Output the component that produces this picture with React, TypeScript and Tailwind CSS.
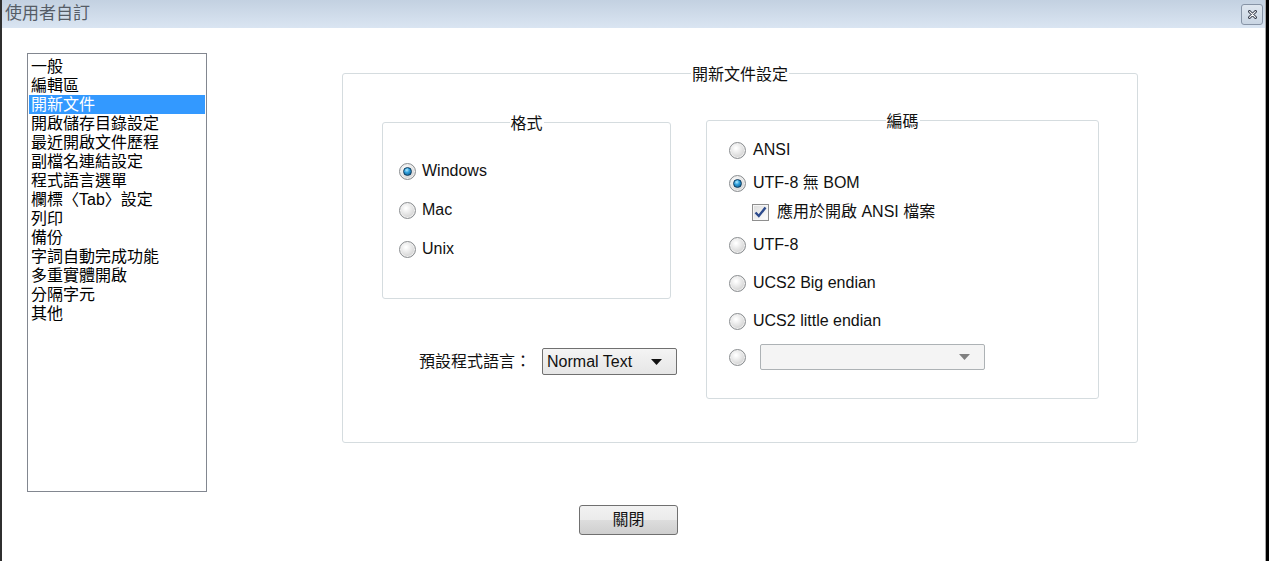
import React from 'react'

const font = { fontFamily: '"Liberation Sans", "Noto Sans CJK TC", sans-serif' }

const categories = [
  '一般',
  '編輯區',
  '開新文件',
  '開啟儲存目錄設定',
  '最近開啟文件歷程',
  '副檔名連結設定',
  '程式語言選單',
  '欄標〈Tab〉設定',
  '列印',
  '備份',
  '字詞自動完成功能',
  '多重實體開啟',
  '分隔字元',
  '其他',
]

function Radio({ checked }: { checked?: boolean }) {
  return (
    <span className="flex h-[17px] w-[17px] shrink-0 items-center justify-center rounded-full border border-[#8a8d90] bg-[radial-gradient(circle_at_40%_35%,#ffffff_5%,#e2e2e2_50%,#bfbfbf_100%)] shadow-[inset_0_0_0_1px_#f0f0f0]">
      {checked && (
        <span className="h-[9px] w-[9px] rounded-full border border-[#0b3a5e] bg-[radial-gradient(circle_at_40%_30%,#b5ecff_0%,#2e9fdc_40%,#08507f_100%)]" />
      )}
    </span>
  )
}

function RadioRow({ label, checked, gap = 'gap-[6px]' }: { label: string; checked?: boolean; gap?: string }) {
  return (
    <div className={`flex h-[20px] items-center ${gap}`}>
      <Radio checked={checked} />
      <span className="whitespace-nowrap text-[16px] leading-[20px] text-[#111]">{label}</span>
    </div>
  )
}

function GroupBox({
  title,
  className,
  children,
}: {
  title: string
  className?: string
  children?: React.ReactNode
}) {
  return (
    <div className={`relative shrink-0 rounded-[3px] border border-[#d5dcdf] ${className ?? ''}`}>
      <span className="absolute -top-[8px] left-1/2 -translate-x-1/2 bg-white px-[1px] text-[16px] leading-[18px] text-[#111]">
        {title}
      </span>
      {children}
    </div>
  )
}

function Arrow({ color }: { color: string }) {
  return (
    <svg width="11" height="6" viewBox="0 0 11 6">
      <path d="M0 0 L11 0 L5.5 6 Z" fill={color} />
    </svg>
  )
}

export default function App() {
  return (
    <div className="flex h-screen flex-col border-l-2 border-r-[3px] border-l-[#2f2f2f] border-r-black bg-white" style={font}>
      <div className="flex h-full flex-col border-r border-r-[#a9a9a9]">
        {/* title bar */}
        <div className="flex h-[28px] shrink-0 items-center justify-between bg-[linear-gradient(#c3d1e1,#dae5f2)] pl-[3px] pr-[2px]">
          <span className="text-[17px] leading-[20px] text-[#555c66]">使用者自訂</span>
          <button className="mt-[1px] flex h-[21px] w-[22px] items-center justify-center rounded-[3px] border border-[#8794a6] bg-[linear-gradient(#dfe7f0,#c9d5e3)]">
            <svg width="9" height="9" viewBox="0 0 9 9">
              <path d="M1.5 1.5 L7.5 7.5 M7.5 1.5 L1.5 7.5" stroke="#3b4250" strokeWidth="3" strokeLinecap="round" />
              <path d="M1.6 1.6 L7.4 7.4 M7.4 1.6 L1.6 7.4" stroke="#ffffff" strokeWidth="1.1" strokeLinecap="round" />
            </svg>
          </button>
        </div>

        {/* body */}
        <div className="flex flex-1 pl-[25px] pt-[25px]">
          <ul className="h-[439px] w-[180px] shrink-0 border border-[#828790] p-[1px] pt-[3px]">
            {categories.map((c, i) => (
              <li
                key={c}
                className={`h-[19px] whitespace-nowrap pl-[2px] text-[16px] leading-[19px] ${
                  i === 2 ? 'bg-[#3399ff] text-white' : 'text-black'
                }`}
              >
                {c}
              </li>
            ))}
          </ul>

          <div className="ml-[135px] flex flex-col pt-[20px]">
            <GroupBox title="開新文件設定" className="h-[370px] w-[796px]">
              <div className="flex pl-[39px] pt-[46px]">
                <div className="mt-[2px] flex w-[289px] shrink-0 flex-col">
                  <GroupBox title="格式" className="h-[177px] w-[289px]">
                    <div className="flex flex-col gap-[19px] pl-[16px] pt-[38px]">
                      <RadioRow label="Windows" checked />
                      <RadioRow label="Mac" />
                      <RadioRow label="Unix" />
                    </div>
                  </GroupBox>
                  <div className="ml-[37px] mt-[49px] flex h-[27px] w-max items-center gap-[11px]">
                    <span className="whitespace-nowrap text-[16px] leading-[20px] text-[#111]">預設程式語言：</span>
                    <div className="flex h-[27px] w-[135px] items-center justify-between rounded-[2px] border border-[#707070] bg-[linear-gradient(#f4f4f4,#e6e6e6)] pl-[4px] pr-[14px]">
                      <span className="text-[16px] leading-[20px] text-[#111]">Normal Text</span>
                      <Arrow color="#111" />
                    </div>
                  </div>
                </div>

                <GroupBox title="編碼" className="ml-[35px] h-[279px] w-[393px]">
                  <div className="flex flex-col pl-[22px] pt-[19px]">
                    <RadioRow label="ANSI" gap="gap-[7px]" />
                    <div className="mt-[13px]">
                      <RadioRow label="UTF-8 無 BOM" checked gap="gap-[7px]" />
                    </div>
                    <div className="ml-[23px] mt-[9px] flex h-[20px] items-center gap-[8px]">
                      <span className="flex h-[17px] w-[17px] items-center justify-center border border-[#8f8f8f] bg-[linear-gradient(135deg,#dcdcdc,#ffffff)] shadow-[inset_0_0_0_1px_#f6f6f6]">
                        <svg width="13" height="12" viewBox="0 0 13 12">
                          <path d="M1.5 6.5 L4.8 10 L11.5 1.5" stroke="#2c4a8c" strokeWidth="2.4" fill="none" />
                        </svg>
                      </span>
                      <span className="whitespace-nowrap text-[16px] leading-[20px] text-[#111]">應用於開啟 ANSI 檔案</span>
                    </div>
                    <div className="mt-[13px]">
                      <RadioRow label="UTF-8" gap="gap-[7px]" />
                    </div>
                    <div className="mt-[18px]">
                      <RadioRow label="UCS2 Big endian" gap="gap-[7px]" />
                    </div>
                    <div className="mt-[18px]">
                      <RadioRow label="UCS2 little endian" gap="gap-[7px]" />
                    </div>
                    <div className="mt-[13px] flex h-[26px] items-center gap-[14px]">
                      <Radio />
                      <div className="flex h-[26px] w-[225px] items-center justify-end rounded-[2px] border border-[#adb2b5] bg-[#f4f4f4] pr-[14px]">
                        <Arrow color="#808080" />
                      </div>
                    </div>
                  </div>
                </GroupBox>
              </div>
            </GroupBox>

            <button className="ml-[237px] mt-[62px] flex h-[30px] w-[99px] items-center justify-center rounded-[3px] border border-[#707070] bg-[linear-gradient(#f2f2f2_0%,#ebebeb_50%,#dddddd_50%,#cfcfcf_100%)] text-[16px] leading-[20px] text-[#111]">
              關閉
            </button>
          </div>
        </div>
      </div>
    </div>
  )
}
